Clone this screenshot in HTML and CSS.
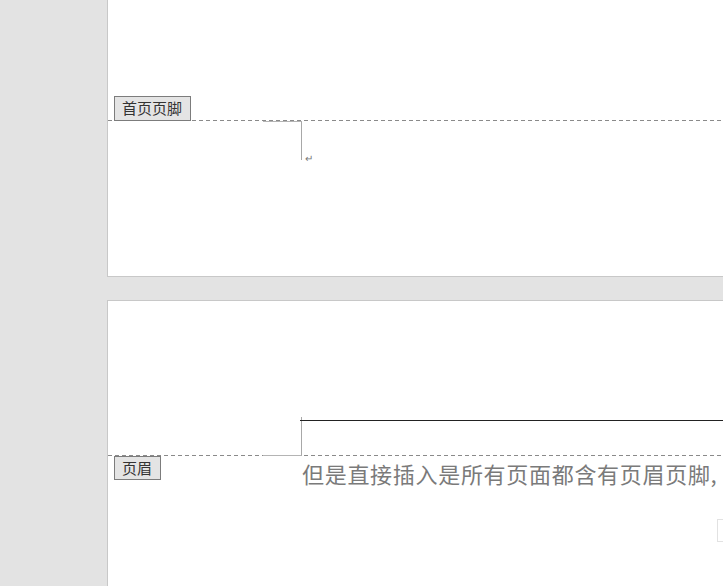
FILE: index.html
```html
<!DOCTYPE html>
<html lang="zh-CN">
<head>
    <meta charset="UTF-8">
    <title>页眉页脚</title>
    <link rel="stylesheet" href="styles.css">
</head>
<body>
<div class="desk">
    <div class="page page-one">
        <div class="footer-top">
            <span class="tag">首页页脚</span>
        </div>
        <div class="mark-row">
            <div class="corner corner-top"></div>
            <span class="para">↵</span>
        </div>
    </div>

    <div class="page page-two">
        <div class="header-area">
            <div class="corner corner-bottom"></div>
            <div class="header-rule"></div>
        </div>
        <div class="body-row">
            <span class="tag">页眉</span>
            <p class="body-text">但是直接插入是所有页面都含有页眉页脚,</p>
        </div>
        <div class="edge-mark"></div>
    </div>
</div>
</body>
</html>
```
FILE: styles.css
```css
html, body {
    margin: 0;
    padding: 0;
}

body {
    background-color: #e3e3e3;
    width: 723px;
    height: 586px;
    overflow: hidden;
    font-family: "Noto Sans CJK SC", "Noto Sans", sans-serif;
}

.desk {
    padding-left: 107px;
    display: flex;
    flex-direction: column;
}

.page {
    background: white;
    border-left: 1px solid #c8c8c8;
    position: relative;
    overflow: hidden;
}

.page-one {
    height: 276px;
    border-bottom: 1px solid #c8c8c8;
}

.page-two {
    margin-top: 23px;
    height: 300px;
    border-top: 1px solid #c8c8c8;
}

/* dashed guide line drawn along the bottom row of a block */
.footer-top,
.header-area {
    background-image: repeating-linear-gradient(to right, #8a8a8a 0 4px, transparent 4px 7px);
    background-size: 100% 1px;
    background-position: 0 100%;
    background-repeat: no-repeat;
}

.footer-top {
    height: 121px;
    display: flex;
    align-items: flex-end;
    padding-left: 6px;
    box-sizing: border-box;
}

.tag {
    display: inline-block;
    box-sizing: border-box;
    height: 25px;
    line-height: 22px;
    padding: 0 8px 0 7px;
    font-size: 15px;
    color: #333;
    background: #e4e4e4;
    border: 1px solid #7c7c7c;
}

.mark-row {
    display: flex;
    align-items: flex-end;
    padding-left: 155px;
}

.corner {
    width: 38px;
    height: 38px;
    border-right: 1px solid #a8a8a8;
}

.corner-top {
    border-top: 1px solid #b4b4b4;
}

.para {
    font-size: 10px;
    line-height: 10px;
    color: #777;
    margin-left: 3px;
    margin-bottom: -3px;
}

.header-area {
    height: 155px;
    display: flex;
    align-items: flex-end;
    padding-left: 155px;
    box-sizing: border-box;
}

.corner-bottom {
    border-bottom: 1px solid #b4b4b4;
}

.header-rule {
    flex: 1;
    height: 34px;
    margin-left: -2px;
    margin-bottom: 1px;
    border-top: 1px solid #222;
}

.body-row {
    display: flex;
    align-items: flex-start;
    padding-left: 6px;
}

.body-row .tag {
    height: 24px;
    line-height: 21px;
}

.body-text {
    margin: 3px 0 0 141px;
    font-size: 22px;
    letter-spacing: 0.7px;
    line-height: 28px;
    color: #7a7a7a;
    white-space: nowrap;
}

.edge-mark {
    position: absolute;
    left: 609px;
    top: 218px;
    width: 6px;
    height: 21px;
    border: 1px solid #e2e2e2;
    border-right: none;
}
```
